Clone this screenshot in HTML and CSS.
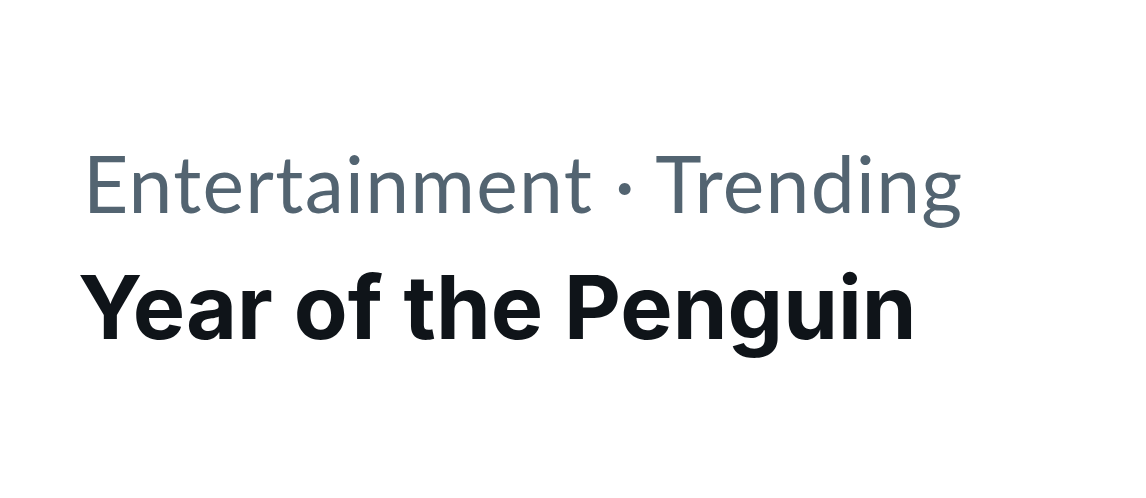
FILE: index.html
```html
<!DOCTYPE html>
<html lang="en">
<head>
<meta charset="utf-8">
<title>Trend</title>
<link rel="stylesheet" href="styles.css">
</head>
<body>
<div class="trend">
  <div class="trend-meta">Entertainment · Trending</div>
  <div class="trend-title">Year of the Penguin</div>
</div>
</body>
</html>
```
FILE: styles.css
```css
html, body {
  margin: 0;
  padding: 0;
  background: #ffffff;
}
.trend {
  padding: 134px 0 0 78px;
  display: flex;
  flex-direction: column;
}
.trend-meta {
  padding-left: 5px;
  font-family: "Lato", "Noto Sans", sans-serif;
  font-weight: 400;
  font-size: 78.6px;
  line-height: 98px;
  letter-spacing: 1.3px;
  color: #536471;
  white-space: nowrap;
}
.trend-title {
  margin-top: 14px;
  font-family: "Inter", "Noto Sans", sans-serif;
  font-weight: 700;
  font-size: 88px;
  line-height: 123px;
  color: #0f1419;
  white-space: nowrap;
}
```
